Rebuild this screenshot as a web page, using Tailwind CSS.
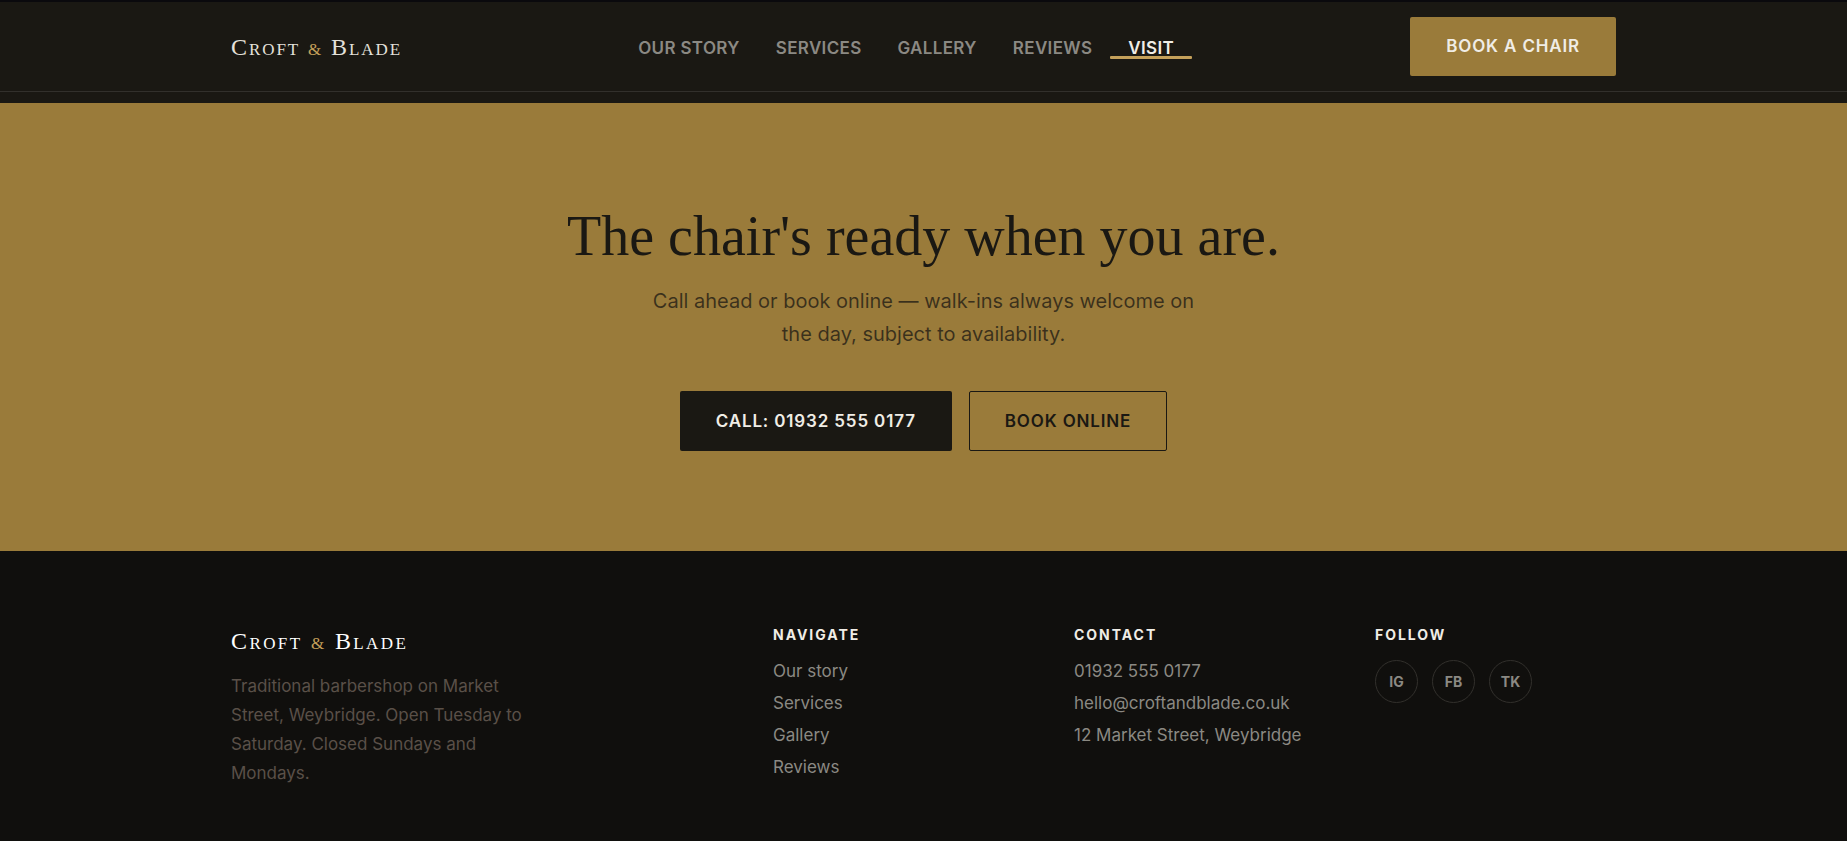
<!DOCTYPE html>
<html lang="en-GB">
<head>
<meta charset="utf-8">
<meta name="viewport" content="width=device-width, initial-scale=1">
<title>Croft &amp; Blade</title>
<script src="https://cdn.jsdelivr.net/npm/@tailwindcss/browser@4"></script>
</head>
<body class="min-h-screen bg-[#100f0d] font-['Inter',sans-serif] text-[#f0ede6]">
<header class="border-t-2 border-[#0a090d] bg-[#1a1813] pb-[11px]">
  <div class="border-b border-[#32302c] px-6 py-[15px]">
    <div class="mx-auto flex max-w-[1385px] items-center justify-between">
      <a href="#" class="pt-1 font-['Liberation_Serif',serif] text-2xl leading-7 tracking-[0.08em] text-[#e4e1db] [font-variant:small-caps]">Croft <span class="text-[17px] text-[#c4a05a]">&amp;</span> Blade</a>
      <nav aria-label="Main" class="flex pt-0.5 text-[17px] leading-5 font-semibold tracking-[0.02em] text-[#8b8983]">
        <a href="#" class="px-[18px]">OUR STORY</a>
        <a href="#" class="px-[18px]">SERVICES</a>
        <a href="#" class="px-[18px]">GALLERY</a>
        <a href="#" class="px-[18px]">REVIEWS</a>
        <a href="#" aria-current="page" class="relative px-[18px] text-[#f0ede6] after:absolute after:inset-x-0 after:-bottom-px after:h-[3px] after:rounded-[1px] after:bg-[#c4a05a]">VISIT</a>
      </nav>
      <a href="#" class="rounded-[2px] bg-[#9a7b3a] px-9 py-[18px] text-[17px] leading-[23px] font-semibold tracking-[0.05em]">BOOK A CHAIR</a>
    </div>
  </div>
</header>
<main class="bg-[#9a7b3a] px-6 py-[100px] text-center text-[#1a1813]">
  <h1 class="font-['Liberation_Serif',serif] text-[56px] leading-[66px]">The chair's ready when you are.</h1>
  <p class="mx-auto mt-4 max-w-[560px] text-xl leading-[33px] text-[#1a1813]/75">Call ahead or book online — walk-ins always welcome on the day, subject to availability.</p>
  <div class="mt-10 flex flex-wrap justify-center gap-[17px] text-[17px] leading-6 font-semibold tracking-[0.05em]">
    <a href="tel:019325550177" class="rounded-[2px] bg-[#1a1813] px-9 py-[18px] text-[#f0ede6]">CALL: 01932 555 0177</a>
    <a href="#" class="rounded-[2px] border border-[#1a1813] px-[35px] py-[17px]">BOOK ONLINE</a>
  </div>
</main>
<footer class="px-6 pt-[72px] pb-16">
  <div class="mx-auto grid max-w-[1385px] grid-cols-[2fr_1fr_1fr_1fr] gap-[60px]">
    <div>
      <a href="#" class="block font-['Liberation_Serif',serif] text-2xl leading-9 tracking-[0.1em] text-white [font-variant:small-caps]">Croft <span class="text-[17px] text-[#c4a05a]">&amp;</span> Blade</a>
      <p class="mt-[10px] max-w-[310px] text-[17px] leading-[29px] text-[#5a5048]">Traditional barbershop on Market Street, Weybridge. Open Tuesday to Saturday. Closed Sundays and Mondays.</p>
    </div>
    <nav aria-labelledby="f-nav">
      <h2 id="f-nav" class="text-sm leading-6 font-bold tracking-[0.14em]">NAVIGATE</h2>
      <ul class="mt-2 text-[17px] leading-8 text-[#8b8983]">
        <li><a href="#">Our story</a></li>
        <li><a href="#">Services</a></li>
        <li><a href="#">Gallery</a></li>
        <li><a href="#">Reviews</a></li>
      </ul>
    </nav>
    <div>
      <h2 class="text-sm leading-6 font-bold tracking-[0.14em]">CONTACT</h2>
      <ul class="mt-2 text-[17px] leading-8 whitespace-nowrap text-[#8b8983]">
        <li><a href="tel:019325550177">01932 555 0177</a></li>
        <li><a href="mailto:hello@croftandblade.co.uk">hello@croftandblade.co.uk</a></li>
        <li>12 Market Street, Weybridge</li>
      </ul>
    </div>
    <div>
      <h2 class="text-sm leading-6 font-bold tracking-[0.14em]">FOLLOW</h2>
      <div class="mt-[13px] flex gap-[14px] text-sm font-bold text-[#8b8983]">
        <a href="#" class="flex size-[43px] items-center justify-center rounded-full border border-[#32302c]">IG</a>
        <a href="#" class="flex size-[43px] items-center justify-center rounded-full border border-[#32302c]">FB</a>
        <a href="#" class="flex size-[43px] items-center justify-center rounded-full border border-[#32302c]">TK</a>
      </div>
    </div>
  </div>
</footer>
</body>
</html>
